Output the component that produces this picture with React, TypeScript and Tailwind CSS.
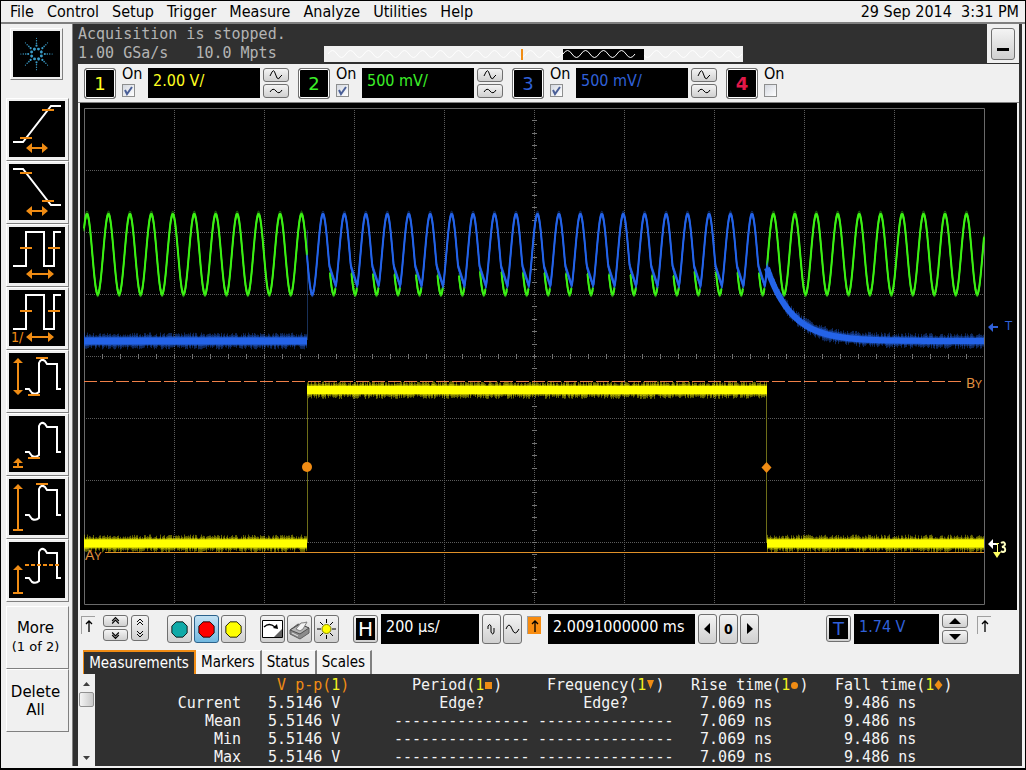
import type { ReactNode } from "react";

const UI_FONT = "font-['DejaVu_Sans_Condensed','DejaVu_Sans',sans-serif]";
const MONO_FONT = "font-['DejaVu_Sans_Mono',monospace]";
const ORANGE = "#f08c14";
const BLUE = "#2463e8";
const GREEN = "#3cf014";
const YELLOW = "#ffff00";

const BUTTON =
  "flex shrink-0 items-center justify-center rounded-[3px] border border-[#707070] bg-linear-to-b from-[#f4f4f4] to-[#d0d0d0]";

const menus = [
  "File",
  "Control",
  "Setup",
  "Trigger",
  "Measure",
  "Analyze",
  "Utilities",
  "Help",
];

interface Channel {
  id: string;
  text: string;
  scale?: string;
  on: boolean;
}

const channels: Channel[] = [
  { id: "1", text: "text-[#ffff20]", scale: "2.00 V/", on: true },
  { id: "2", text: "text-[#3cf028]", scale: "500 mV/", on: true },
  { id: "3", text: "text-[#3060d8]", scale: "500 mV/", on: true },
  { id: "4", text: "text-[#e01848] font-bold", on: false },
];

/* ---------- sidebar ---------- */

function HArrow({ x1, x2 }: { x1: number; x2: number }) {
  return (
    <path
      d={`M${x1} 47l6-5v4H${x2 - 6}v-4l6 5l-6 5v-4H${x1 + 6}v4z`}
      fill={ORANGE}
    />
  );
}

function VArrow({ top, base = 51 }: { top: number; base?: number }) {
  return (
    <g fill={ORANGE}>
      <path d={`M9 ${top}l5 5H10V${base}H8V${top + 5}H4z`} />
      <path d={`M4 ${base - 1}h10v2H4z`} />
    </g>
  );
}

function Pulse() {
  return (
    <path
      d="M16 36h4l3 4q4 2 7-1V10q2-5 6-2l2 3h10v25h4"
      fill="none"
      stroke="#fff"
      strokeWidth="2"
    />
  );
}

function Ticks({ d }: { d: string }) {
  return <path d={d} stroke={ORANGE} strokeWidth="2" fill="none" />;
}

function WhiteLine({ d }: { d: string }) {
  return <path d={d} stroke="#fff" strokeWidth="2" fill="none" />;
}

const SQUARE = "M4 39H17V5H35V39H45V5H52";

const measurementTools: { label: string; icon: ReactNode }[] = [
  {
    label: "Rise time",
    icon: (
      <>
        <WhiteLine d="M4 41H14L42 5H52" />
        <Ticks d="M11 37H23M33 9H45" />
        <HArrow x1={17} x2={39} />
      </>
    ),
  },
  {
    label: "Fall time",
    icon: (
      <>
        <WhiteLine d="M4 5H14L42 41H52" />
        <Ticks d="M11 9H23M33 37H45" />
        <HArrow x1={17} x2={39} />
      </>
    ),
  },
  {
    label: "Period",
    icon: (
      <>
        <WhiteLine d={SQUARE} />
        <Ticks d="M11 21H23M39 21H51" />
        <HArrow x1={17} x2={45} />
      </>
    ),
  },
  {
    label: "Frequency",
    icon: (
      <>
        <WhiteLine d={SQUARE} />
        <Ticks d="M11 21H23M39 21H51" />
        <HArrow x1={17} x2={45} />
        <text x="2" y="52" fontSize="14" fill={ORANGE}>
          1/
        </text>
      </>
    ),
  },
  {
    label: "V p-p",
    icon: (
      <>
        <Pulse />
        <Ticks d="M27 5H39M19 42H31" />
        <path d="M9 5l5 5H10V37h4l-5 5l-5-5H8V10H4z" fill={ORANGE} />
      </>
    ),
  },
  {
    label: "V min",
    icon: (
      <>
        <Pulse />
        <Ticks d="M19 42H31" />
        <VArrow top={42} />
      </>
    ),
  },
  {
    label: "V max",
    icon: (
      <>
        <Pulse />
        <Ticks d="M27 5H39" />
        <VArrow top={5} />
      </>
    ),
  },
  {
    label: "V avg",
    icon: (
      <>
        <Pulse />
        <path d="M16 23H50" stroke={ORANGE} strokeWidth="2" strokeDasharray="4 2" />
        <VArrow top={23} />
      </>
    ),
  },
];

function Logo() {
  const spokes = [0, 45, 90, 135, 180, 225, 270, 315];
  return (
    <svg viewBox="0 0 48 46" className="h-[46px] w-12 bg-black" fill="#3a9cc8">
      {spokes.map((a) => (
        <g key={a} transform={`translate(24 23) rotate(${a})`}>
          <circle cx="5" cy="2" r="1.5" />
          <circle cx="8.5" cy="0" r="1.1" />
          <circle cx="11" cy="0" r="0.8" />
          <circle cx="13.5" cy="0" r="0.7" />
          <circle cx="16" cy="0" r="0.6" />
        </g>
      ))}
    </svg>
  );
}

const RAISED =
  "border border-t-white border-l-white border-r-[#808080] border-b-[#808080]";

function Sidebar() {
  return (
    <aside className="flex w-[72px] shrink-0 flex-col border-r border-[#808080] pl-[5px] pt-1">
      <button
        aria-label="About"
        className={`ml-1 flex h-[52px] w-[53px] items-start p-[2px] ${RAISED}`}
      >
        <Logo />
      </button>
      <div className="mt-[18px] flex flex-col">
        {measurementTools.map((tool) => (
          <button
            key={tool.label}
            aria-label={tool.label}
            className={`flex h-[63px] w-[63px] items-start p-[2px] ${RAISED}`}
          >
            <svg viewBox="0 0 56 56" className="size-14 bg-black">
              {tool.icon}
            </svg>
          </button>
        ))}
      </div>
      <div className="mt-1 flex flex-col font-['DejaVu_Sans',sans-serif] text-[15px] leading-[18px]">
        <button className={`h-[63px] w-[63px] pr-1 ${RAISED}`}>
          More
          <br />
          <span className="text-[13px]">(1 of 2)</span>
        </button>
        <button className={`h-[63px] w-[63px] pr-1 ${RAISED}`}>
          Delete
          <br />
          All
        </button>
      </div>
    </aside>
  );
}

/* ---------- header ---------- */

function ripple(from: number, to: number, mid: number) {
  let d = `M${from} ${mid}`;
  for (let x = from; x + 9 <= to; x += 18) {
    d += `q4.5 -7 9 0t9 0`;
  }
  return d;
}

function StatusHeader() {
  return (
    <header className="flex h-10">
      <p
        className={`w-[246px] shrink-0 whitespace-pre pt-px text-[15px] leading-[19px] text-[#b4b4b4] ${MONO_FONT}`}
      >
        {"Acquisition is stopped.\n1.00 GSa/s   10.0 Mpts"}
      </p>
      <div className="flex flex-1 items-end pb-[2px]">
        <svg
          viewBox="0 0 419 16"
          className="w-full max-w-[419px] bg-[#f0f0f0]"
          fill="none"
        >
          <path d={ripple(4, 412, 8)} stroke="#fff" />
          <path d="M198 3V14" stroke={ORANGE} strokeWidth="2" />
          <path d="M239 3H320V14H239z" fill="#000" />
          <path d={ripple(239, 311, 8)} stroke="#fff" />
        </svg>
      </div>
      <div className="h-[39px] w-8 shrink-0 bg-[#f0f0f0] p-1">
        <button
          aria-label="Minimize"
          className={`h-8 w-6 items-end pb-2 ${BUTTON}`}
        >
          <span className="h-[3px] w-3 self-end bg-black" />
        </button>
      </div>
    </header>
  );
}

function WaveButton({ label, d }: { label: string; d: string }) {
  return (
    <button aria-label={label} className={`h-[14px] w-[26px] ${BUTTON}`}>
      <svg viewBox="0 0 14 12" className="h-3 w-[14px]" fill="none" stroke="#000">
        <path d={d} />
      </svg>
    </button>
  );
}

function ChannelControl({ channel }: { channel: Channel }) {
  return (
    <div className="flex w-[214px] items-start">
      <button
        className={`flex h-[31px] w-8 shrink-0 items-center justify-center rounded-[3px] border border-[#707070] bg-black font-['DejaVu_Sans',sans-serif] text-[18px] ring-1 ring-white ring-inset ${channel.text}`}
      >
        {channel.id}
      </button>
      <label className="ml-[6px] flex w-[22px] shrink-0 flex-col text-[16px] leading-[14px]">
        <span className="-mt-px mb-[3px]">On</span>
        <span className="grid size-[13px]">
          <input
            type="checkbox"
            defaultChecked={channel.on}
            className="peer col-start-1 row-start-1 size-[13px] appearance-none border border-[#8e8f8f] bg-linear-to-br from-[#d4d8e0] to-white"
          />
          <svg
            viewBox="0 0 13 13"
            className="pointer-events-none invisible col-start-1 row-start-1 size-[13px] peer-checked:visible"
            fill="none"
            stroke="#4a5f97"
            strokeWidth="2"
          >
            <path d="M3 6L5 10L10 3" />
          </svg>
        </span>
      </label>
      {channel.scale && (
        <>
          <input
            aria-label={`Channel ${channel.id} scale`}
            defaultValue={channel.scale}
            className={`ml-1 h-[30px] w-28 min-w-0 bg-black pb-[5px] pl-[5px] text-[16px] ${channel.text}`}
          />
          <div className="ml-[3px] flex flex-col gap-[2px]">
            <WaveButton
              label={`Channel ${channel.id} scale up`}
              d="M1 7L3 3Q5 0 6 4L8 9Q10 11 11 8L13 6"
            />
            <WaveButton
              label={`Channel ${channel.id} scale down`}
              d="M1 7Q4 2 7 6T13 5"
            />
          </div>
        </>
      )}
    </div>
  );
}

/* ---------- waveform display ---------- */

const PERIOD = 21.45;
const FIRST_PEAK = 87;
const PULSE_START = 307;
const PULSE_END = 767;

const phase = (x: number) => {
  const p = (x - FIRST_PEAK) / PERIOD;
  return p - Math.floor(p);
};
const sine = (x: number) => 254 - 40 * Math.cos(2 * Math.PI * phase(x));

function rectified(x: number) {
  const p = phase(x);
  if (x < 320 || p < 0.3 || p > 0.65) return sine(x);
  return Math.min(sine(x), 266 + (p - 0.3) * 66);
}

const decay = (x: number) => 341 - 73 * Math.exp(-(x - PULSE_END) / 25);

function trace(
  from: number,
  to: number,
  y: (x: number) => number,
  visible: (x: number) => boolean = () => true
) {
  let d = "";
  let pen = "M";
  for (let x = from; x <= to; x += 0.5) {
    if (!visible(x)) {
      pen = "M";
      continue;
    }
    d += `${pen}${x} ${y(x).toFixed(1)}`;
    pen = "L";
  }
  return d;
}

function jitter(n: number) {
  const v = Math.sin(n * 127.1) * 43758.5453;
  return v - Math.floor(v);
}

function noise(
  from: number,
  to: number,
  y: (x: number) => number,
  min: number,
  spread: number
) {
  let d = "";
  for (let x = from; x < to; x++) {
    const up = min + jitter(x) * spread;
    const down = min + jitter(x + 0.37) * spread;
    d += `M${x + 0.5} ${(y(x) - up).toFixed(1)}V${(y(x) + down).toFixed(1)}`;
  }
  return d;
}

function Band({
  from,
  to,
  y,
  half,
  color,
}: {
  from: number;
  to: number;
  y: (x: number) => number;
  half: number;
  color: string;
}) {
  return (
    <g fill="none" stroke={color}>
      <path d={noise(from, to, y, half + 1, 4)} opacity="0.4" />
      <path d={noise(from, to, y, half, 2)} opacity="0.5" />
      <path d={trace(from, to, y)} strokeWidth={half * 2} />
    </g>
  );
}

function Fuzzy({ d, color }: { d: string; color: string }) {
  return (
    <g fill="none" stroke={color} strokeLinejoin="round">
      <path d={d} opacity="0.4" strokeWidth="1" transform="translate(0 -3)" />
      <path d={d} opacity="0.4" strokeWidth="1" transform="translate(0 3)" />
      <path d={d} strokeWidth="2" />
      <path d={d} strokeWidth="1" transform="translate(0 2)" />
      <path d={d} strokeWidth="1" transform="translate(0 -1)" />
    </g>
  );
}

const greenVisible = (x: number) => {
  if (x <= PULSE_START || x >= PULSE_END) return true;
  return x > 320 && phase(x) > 0.32 && phase(x) < 0.6;
};

function Graticule() {
  const columns = [174, 264, 354, 444, 534, 624, 714, 804, 894];
  const rows = [170, 232, 294, 356, 418, 480, 542];
  const xTicks = Array.from({ length: 49 }, (_, i) => 102 + i * 18);
  const yTicks = Array.from({ length: 39 }, (_, i) => Math.round(108 + (i + 1) * 12.4));
  return (
    <g stroke="#747474" fill="none">
      <path
        strokeDasharray="1 1"
        stroke="#5c5c5c"
        d={
          columns.map((x) => `M${x}.5 108V604`).join("") +
          rows.map((y) => `M84 ${y}.5H984`).join("")
        }
      />
      <path
        d={
          xTicks.map((x) => `M${x}.5 354v5`).join("") +
          yTicks.map((y) => `M532 ${y}.5h5`).join("")
        }
      />
      <path d="M84.5 108.5H984.5V604.5H84.5z" stroke="#6a6a6a" />
    </g>
  );
}

function ScopeDisplay() {
  const low = () => 543.5;
  const high = () => 390;
  const base = () => 341;
  return (
    <svg
      viewBox="80 103 937 507"
      className="block w-full bg-black"
      role="img"
      aria-label="Waveform display"
    >
      <Graticule />
      <path d="M307.5 230V340" stroke="#183058" />
      <path d="M307.5 390V543M766.5 390V543" stroke="#6e6e18" />
      <Fuzzy d={trace(84, 984, sine, greenVisible)} color={GREEN} />
      <Fuzzy d={trace(PULSE_START, PULSE_END, rectified)} color={BLUE} />
      <Band from={84} to={307} y={base} half={3.5} color={BLUE} />
      <Band from={767} to={984} y={decay} half={3} color={BLUE} />
      <Band from={84} to={307} y={low} half={4} color={YELLOW} />
      <Band from={307} to={767} y={high} half={4} color={YELLOW} />
      <Band from={767} to={984} y={low} half={4} color={YELLOW} />
      <path d="M84 381.5H964" stroke="#f08048" strokeDasharray="13 3" />
      <path d="M105 552.5H984" stroke="#e09028" />
      <g fill="#e09040" fontFamily="Lato, sans-serif">
        <text x="85" y="560" fontSize="14">
          A<tspan fontSize="11">Y</tspan>
        </text>
        <text x="966" y="388" fontSize="14">
          B<tspan fontSize="11">Y</tspan>
        </text>
      </g>
      <circle cx="307" cy="467" r="5" fill={ORANGE} />
      <path d="M766.5 462l5 5.5l-5 5.5l-5-5.5z" fill={ORANGE} />
      <path d="M988 327l5-4v3h5v2h-5v4z" fill="#3060d8" />
      <text x="1005" y="330" fontSize="13" fill="#3060d8">
        T
      </text>
      <path d="M988 544l5-5v4h5v2h-5v4z" fill="#fff" />
      <path d="M996 543.5h3M997.5 543V553" stroke="#ffff80" />
      <path d="M993 552h8l-4 6z" fill="#ffff60" />
      <path d="M1001 543q3-2 4 1q0 2-3 3q4 0 3 4q-2 2-4 0" stroke="#ffffc0" strokeWidth="2" fill="none" />
    </svg>
  );
}

/* ---------- horizontal / trigger toolbar ---------- */

function EdgeMarker({ className = "bg-[#f0f0f0]" }: { className?: string }) {
  return (
    <span
      className={`flex h-[18px] w-[14px] shrink-0 items-center justify-center border-t border-l border-[#a0a0a0] ${className}`}
    >
      <svg viewBox="0 0 8 14" className="h-[14px] w-2" fill="none" stroke="#000">
        <path d="M4 13V2M1 5L4 2L7 5" strokeWidth="1.3" />
      </svg>
    </span>
  );
}

function Glyph({
  label,
  size,
  viewBox,
  children,
}: {
  label: string;
  size: string;
  viewBox: string;
  children: ReactNode;
}) {
  return (
    <button aria-label={label} className={`${size} ${BUTTON}`}>
      <svg viewBox={viewBox} className="max-h-full w-full" fill="none" stroke="#000">
        {children}
      </svg>
    </button>
  );
}

const OCTAGON = "M9 4h8l5 5v8l-5 5h-8l-5-5v-8z";

function RunButton({
  label,
  fill,
  active,
}: {
  label: string;
  fill: string;
  active?: boolean;
}) {
  return (
    <button
      aria-label={label}
      className={`flex h-7 w-[25px] items-center justify-center rounded-[3px] border ${
        active
          ? "border-[#2c628b] bg-linear-to-b from-[#c4e2f4] to-[#70b8e0]"
          : "border-[#707070] bg-linear-to-b from-[#f4f4f4] to-[#d0d0d0]"
      }`}
    >
      <svg viewBox="3 3 20 20" className="size-[17px]">
        <path d={OCTAGON} fill={fill} stroke="#000" />
      </svg>
    </button>
  );
}

function Toolbar() {
  return (
    <div className="flex h-10 items-start pl-[3px] pt-1 pr-7">
      <div className="mt-[2px]">
        <EdgeMarker />
      </div>
      <div className="mt-px ml-2 flex flex-col gap-[2px]">
        <Glyph label="Offset up" size="h-3 w-[25px]" viewBox="0 0 24 12">
          <path d="M8 6L12 2L16 6M8 9L12 5L16 9" strokeWidth="1.4" />
        </Glyph>
        <Glyph label="Offset down" size="h-3 w-[25px]" viewBox="0 0 24 12">
          <path d="M8 3L12 7L16 3M8 6L12 10L16 6" strokeWidth="1.4" />
        </Glyph>
      </div>
      <div className="mt-px ml-[3px]">
        <Glyph label="Offset" size="h-[26px] w-[18px]" viewBox="0 0 16 24">
          <path d="M5 6L8 3L11 6M5 9L8 6L11 9M5 15L8 18L11 15M5 18L8 21L11 18" />
        </Glyph>
      </div>
      <div className="mt-px ml-[18px] flex gap-[2px]">
        <RunButton label="Run" fill="#10aaa8" />
        <RunButton label="Stop" fill="#ff0000" active />
        <RunButton label="Single" fill="#ffff00" />
      </div>
      <div className="mt-px ml-[14px] flex gap-[2px]">
        <Glyph label="Autoscale" size="h-7 w-[25px]" viewBox="0 0 23 24">
          <path d="M1.5 3.5h20v17h-20z" fill="#fff" />
          <path d="M21 12v8h-8z" fill="#606060" stroke="none" />
          <path d="M3 10Q8 5 14 10" strokeWidth="1.3" />
          <path d="M17 12l-5-1l4-4z" fill="#000" stroke="none" />
        </Glyph>
        <Glyph label="Print" size="h-7 w-[25px]" viewBox="0 0 23 24">
          <path d="M2 13l8-6l11 4v5l-9 6l-10-5z" fill="#8c8c8c" stroke="#606060" />
          <path d="M2 13l10 4l9-6l-9-4z" fill="#b4b4b4" stroke="#505050" />
          <path d="M8 12l5-6q3 0 6-1l-4 7l-3 2z" fill="#f4f4f4" stroke="#808080" />
          <path d="M4 16l6 3" stroke="#e0e0e0" />
        </Glyph>
        <Glyph label="Brightness" size="h-7 w-[25px]" viewBox="0 0 23 24">
          <path d="M11.5 2v4M11.5 18v4M2 12h4M17 12h4M5 5l3 3M15 16l3 3M18 5l-3 3M8 16l-3 3" />
          <circle cx="11.5" cy="12" r="4.5" fill="#ffff00" stroke="#808000" />
        </Glyph>
      </div>
      <button className={`mt-px ml-[14px] h-7 w-[25px] ${BUTTON}`}>
        <span className="flex h-[22px] w-[19px] items-center justify-center bg-black font-['DejaVu_Sans',sans-serif] text-[20px] leading-none text-white">
          H
        </span>
      </button>
      <input
        aria-label="Horizontal scale"
        defaultValue="200 µs/"
        className="ml-[3px] h-[30px] w-[98px] min-w-0 bg-black pb-[5px] pl-[5px] text-[16px] text-white"
      />
      <div className="ml-[3px] flex gap-[2px]">
        <Glyph label="Zoom time in" size="h-[30px] w-[19px]" viewBox="0 0 17 28">
          <path d="M5 14V11Q7 8 8 11V17Q10 21 11 17V13" />
        </Glyph>
        <Glyph label="Zoom time out" size="h-[30px] w-[19px]" viewBox="0 0 17 28">
          <path d="M2 14Q5 6 8 14T15 14" />
        </Glyph>
      </div>
      <div className="mt-[2px] ml-[5px]">
        <EdgeMarker className="bg-[#f88c10]" />
      </div>
      <input
        aria-label="Horizontal position"
        defaultValue="2.0091000000 ms"
        className="ml-[7px] h-[30px] w-[147px] min-w-0 bg-black pb-[5px] pl-[5px] text-[16px] text-white"
      />
      <div className="ml-[3px] flex gap-[2px]">
        <Glyph label="Delay back" size="h-[30px] w-[19px]" viewBox="0 0 17 28">
          <path d="M11 8v11l-6-5z" fill="#000" stroke="none" />
        </Glyph>
        <button className={`h-[30px] w-[19px] text-[14px] font-bold ${BUTTON}`}>0</button>
        <Glyph label="Delay forward" size="h-[30px] w-[19px]" viewBox="0 0 17 28">
          <path d="M6 8v11l6-5z" fill="#000" stroke="none" />
        </Glyph>
      </div>
      <div className="ml-auto flex">
        <button className={`mt-px h-[27px] w-[25px] ${BUTTON}`}>
          <span className="flex h-[21px] w-[19px] items-center justify-center bg-black font-['DejaVu_Sans',sans-serif] text-[18px] leading-none text-[#3060d8]">
            T
          </span>
        </button>
        <input
          aria-label="Trigger level"
          defaultValue="1.74 V"
          className="ml-[3px] h-[30px] w-[85px] bg-black pb-[5px] pl-[5px] text-[16px] text-[#3060d8]"
        />
        <div className="ml-[3px] flex flex-col gap-[2px]">
          <Glyph label="Trigger level up" size="h-[14px] w-[26px]" viewBox="0 0 24 12">
            <path d="M6 9h12l-6-6z" fill="#000" stroke="none" />
          </Glyph>
          <Glyph label="Trigger level down" size="h-[14px] w-[26px]" viewBox="0 0 24 12">
            <path d="M6 3h12l-6 6z" fill="#000" stroke="none" />
          </Glyph>
        </div>
        <div className="mt-[2px] ml-[9px]">
          <EdgeMarker />
        </div>
      </div>
    </div>
  );
}

/* ---------- results ---------- */

function Tabs() {
  return (
    <div role="tablist" className="flex h-6 pl-[5px] text-[15px] leading-[23px]">
      <button
        role="tab"
        aria-selected="true"
        className="w-[113px] border-t-2 border-r-2 border-l border-[#f08c14] bg-[#303030] text-white"
      >
        Measurements
      </button>
      {["Markers", "Status", "Scales"].map((name) => (
        <button
          key={name}
          role="tab"
          aria-selected="false"
          className="border-t border-r-2 border-t-white border-r-[#808080] bg-[#f4f4f4] px-[5px]"
        >
          {name}
        </button>
      ))}
    </div>
  );
}

const NO_RESULT = "---------------";

const results = [
  ["Current", "  5.5146 V", "     Edge?", "     Edge?", "  7.069 ns", "  9.486 ns"],
  ["Mean", "  5.5146 V", NO_RESULT, NO_RESULT, "  7.069 ns", "  9.486 ns"],
  ["Min", "  5.5146 V", NO_RESULT, NO_RESULT, "  7.069 ns", "  9.486 ns"],
  ["Max", "  5.5146 V", NO_RESULT, NO_RESULT, "  7.069 ns", "  9.486 ns"],
];

const headings = [
  { name: "  Period", mark: "M1 3h7v7H1z" },
  { name: " Frequency", mark: "M1 1h7L4.5 10z" },
  { name: " Rise time", mark: "M4.5 3a3.5 3.5 0 1 1 0 7a3.5 3.5 0 1 1 0-7z" },
  { name: " Fall time", mark: "M4.5 1l4 5l-4 5l-4-5z" },
];

function Results() {
  return (
    <div className="flex h-[92px]">
      <div className="flex w-[17px] shrink-0 flex-col items-center bg-[#f0f0f0]">
        <svg viewBox="0 0 17 18" className="h-[18px] w-[17px]">
          <path d="M5 12h7l-3.5-4z" fill="#404040" />
        </svg>
        <span className="h-[15px] w-[15px] rounded-[2px] border border-[#909090] bg-linear-to-r from-[#f4f4f4] to-[#c8c8c8]" />
        <svg viewBox="0 0 17 18" className="mt-auto h-[18px] w-[17px]">
          <path d="M5 8h7l-3.5 4z" fill="#404040" />
        </svg>
      </div>
      <table
        className={`mt-[2px] table-fixed self-start whitespace-pre text-left text-[15px] leading-[18px] text-[#f4f4f4] ${MONO_FONT}`}
      >
        <thead>
          <tr>
            <td className="w-[155px] p-0" />
            <th className="w-36 p-0 font-normal text-[#f08c14]">
              {"   V p-p("}
              <span className="text-[#f0f020]">1</span>)
            </th>
            {headings.map((h) => (
              <th key={h.name} className="w-36 p-0 font-normal">
                {h.name}(<span className="text-[#f0f020]">1</span>
                <svg viewBox="0 0 9 11" className="inline-block h-[11px] w-[9px] align-baseline">
                  <path d={h.mark} fill={ORANGE} />
                </svg>
                )
              </th>
            ))}
          </tr>
        </thead>
        <tbody>
          {results.map(([label, ...values]) => (
            <tr key={label}>
              <th className="p-0 pr-[9px] text-right font-normal">{label}</th>
              {values.map((value, i) => (
                <td key={i} className="p-0">
                  {value}
                </td>
              ))}
            </tr>
          ))}
        </tbody>
      </table>
    </div>
  );
}

export default function App() {
  return (
    <div
      className={`flex min-h-screen flex-col border border-b-2 border-black bg-[#f0f0f0] pb-[2px] text-black ${UI_FONT}`}
    >
      <nav className="flex h-[23px] items-center border-b-2 border-[#808080] pt-px pr-[6px] pl-[9px] text-[16px] leading-5">
        <div className="flex gap-[13px]">
          {menus.map((menu) => (
            <button key={menu}>{menu}</button>
          ))}
        </div>
        <time className="ml-auto whitespace-pre">29 Sep 2014  3:31 PM</time>
      </nav>
      <div className="flex flex-1">
        <Sidebar />
        <main className="mr-[3px] min-w-0 flex-1 bg-[#303030] pr-[3px] pl-[5px]">
          <StatusHeader />
          <section className="bg-[#f0f0f0]">
            <div className="flex h-[39px] border-b border-[#808080] pt-1 pl-[6px]">
              {channels.map((channel) => (
                <ChannelControl key={channel.id} channel={channel} />
              ))}
            </div>
            <div className="pr-[2px] pl-[2px]">
              <ScopeDisplay />
            </div>
            <Toolbar />
            <Tabs />
          </section>
          <Results />
        </main>
      </div>
    </div>
  );
}
